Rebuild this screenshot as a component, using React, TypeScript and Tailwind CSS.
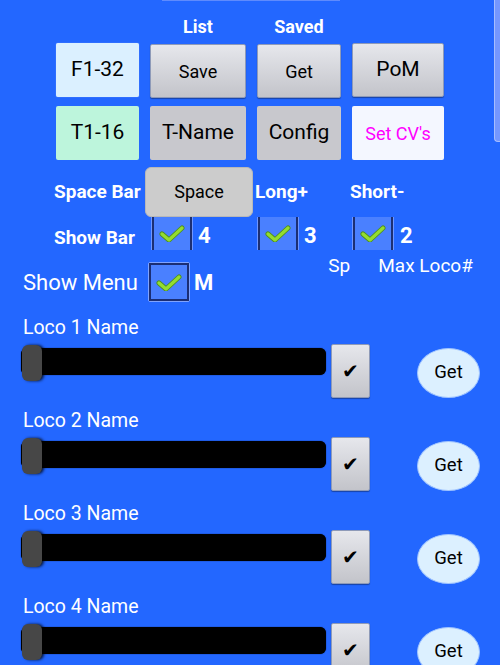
import React from "react";

const Check = () => (
  <svg width="26" height="17" viewBox="0 0 26 17">
    <path d="M3 9 L10 15 L23 3" stroke="#4f8f1c" strokeWidth="5" fill="none" strokeLinecap="round" strokeLinejoin="round" />
    <path d="M3 9 L10 15 L23 3" stroke="#94dd30" strokeWidth="3.2" fill="none" strokeLinecap="round" strokeLinejoin="round" />
  </svg>
);

const BarBox = () => (
  <div className="w-[40px] h-[33px] flex items-center justify-center bg-[#4a80ff] border-x-2 border-[#1c2f72] shadow-[-1px_0_0_#6f96ff,1px_0_0_#6f96ff]">
    <Check />
  </div>
);

const gradBtn =
  "flex items-center justify-center rounded-[2px] border border-[#8e9ab8] bg-gradient-to-b from-[#e6e7ec] to-[#c3c4ca] shadow-[0_1px_1px_rgba(0,0,0,0.35)] text-black";
const flatBtn = "flex items-center justify-center rounded-[2px]";

const LocoRow = ({ n }: { n: number }) => (
  <div className="pl-[21px] mb-[10px]">
    <div className="h-[26px] leading-[26px] pl-[2px] text-[19.5px] text-white">Loco {n} Name</div>
    <div className="mt-[3px] h-[54px] flex items-start">
      <div className="relative w-[305px] h-[27px] mt-[4px] bg-black rounded-[6px] shadow-[0_0_1px_#000]">
        <div className="absolute left-[1px] top-[-3px] w-[20px] h-[36px] rounded-[6px] bg-[#474747] shadow-[2px_0_3px_rgba(0,0,0,0.8)]" />
      </div>
      <div className={`${gradBtn} ml-[5px] w-[39px] h-[54px] text-[20px] font-['DejaVu_Sans',sans-serif]`}>✔</div>
      <div className="ml-[47px] mt-[4px] w-[63px] h-[50px] rounded-[50%] bg-[#dcf0ff] border border-[#9ec3ff] flex items-center justify-center text-[18.5px] text-black">
        Get
      </div>
    </div>
  </div>
);

export default function App() {
  return (
    <div className="relative w-[500px] h-[665px] overflow-hidden bg-[#2367ff] font-['Roboto','Noto_Sans',sans-serif]">
      <div className="ml-[162px] w-[178px] h-px bg-[#5f8bfd]" />
      {/* header labels */}
      <div className="mt-[13px] ml-[56px] grid grid-cols-[83px_96px_84px_92px] gap-x-[11px] h-[26px] leading-[26px] text-white font-bold text-[18px]">
        <div />
        <div className="text-center">List</div>
        <div className="text-center">Saved</div>
        <div />
      </div>
      {/* button grid */}
      <div className="mt-[3px] ml-[56px] grid grid-cols-[83px_96px_84px_92px] grid-rows-[54px_54px] gap-x-[11px] gap-y-[9px]">
        <div className={`${flatBtn} bg-[#dbf0ff] text-[21px] text-black shadow-[0_0_1px_#9fc0ff]`}>F1-32</div>
        <div className={`${gradBtn} text-[18px] translate-y-[1px]`}>Save</div>
        <div className={`${gradBtn} text-[18px] translate-y-[1px]`}>Get</div>
        <div className={`${gradBtn} text-[21px]`}>PoM</div>
        <div className={`${flatBtn} bg-[#bdf5dc] text-[21px] text-black`}>T1-16</div>
        <div className={`${flatBtn} bg-[#c8c8cd] text-[21px] text-black`}>T-Name</div>
        <div className={`${flatBtn} bg-[#c8c8cd] text-[21px] text-black`}>Config</div>
        <div className={`${flatBtn} bg-[#f4f7ff] text-[18px] text-[#ff00ff]`}>Set CV's</div>
      </div>
      {/* space bar row */}
      <div className="mt-[7px] h-[50px] pl-[54px] flex items-center text-white font-bold text-[19px]">
        <span className="w-[91px] whitespace-nowrap">Space Bar</span>
        <div className="w-[108px] h-[50px] rounded-[6px] bg-[#cccccc] border border-[#b8b8b8] flex items-start justify-center pt-[10px] text-[18px] font-normal text-black">
          Space
        </div>
        <span className="ml-[2px] w-[95px]">Long+</span>
        <span>Short-</span>
      </div>
      {/* show bar row */}
      <div className="h-[33px] pl-[54px] flex items-center text-white font-bold">
        <span className="w-[98px] text-[19px] pt-[10px]">Show Bar</span>
        <BarBox />
        <span className="ml-[6px] w-[60px] text-[22px] pt-[4px]">4</span>
        <BarBox />
        <span className="ml-[6px] w-[49px] text-[22px] pt-[4px]">3</span>
        <BarBox />
        <span className="ml-[7px] text-[22px] pt-[4px]">2</span>
      </div>
      {/* show menu row */}
      <div className="flex items-start mb-[13px]">
        <div className="pl-[23px] pt-[12px] flex items-center">
          <span className="w-[125px] text-[22px] text-white">Show Menu</span>
          <div className="w-[42px] h-[40px] rounded-[2px] border border-[#7fa3ff]">
            <div className="w-full h-full border-2 border-[#1b2e74] bg-[#4a80ff] flex items-center justify-center">
              <Check />
            </div>
          </div>
          <span className="ml-[4px] text-[22px] font-bold text-white">M</span>
        </div>
        <div className="ml-[115px] mt-[5px] flex items-center h-[22px] text-[19px] text-white">
          <span className="w-[50px]">Sp</span>
          <span>Max Loco#</span>
        </div>
      </div>
      {[1, 2, 3, 4].map((n) => (
        <LocoRow key={n} n={n} />
      ))}
      <div className="absolute right-0 top-0 w-[6px] h-[142px] rounded-bl-[4px] bg-[#7497ff] border-l border-b border-[#a6bdff]" />
    </div>
  );
}
